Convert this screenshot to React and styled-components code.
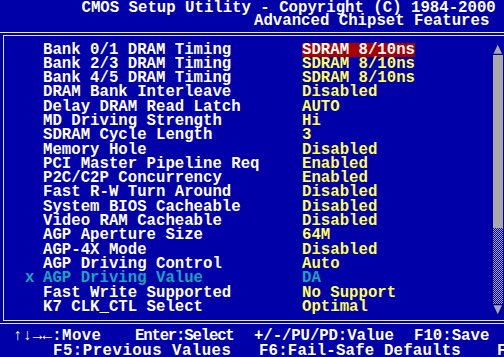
import React from "react";
import styled, { createGlobalStyle } from "styled-components";

const BLUE = "#0000a8";
const GRAY = "#a8a8a8";

const GlobalStyle = createGlobalStyle`
  html, body {
    margin: 0;
    padding: 0;
    background: ${BLUE};
    overflow: hidden;
  }
`;

const Data = [
  { label: "Bank 0/1 DRAM Timing", value: "SDRAM 8/10ns", selected: true },
  { label: "Bank 2/3 DRAM Timing", value: "SDRAM 8/10ns" },
  { label: "Bank 4/5 DRAM Timing", value: "SDRAM 8/10ns" },
  { label: "DRAM Bank Interleave", value: "Disabled" },
  { label: "Delay DRAM Read Latch", value: "AUTO" },
  { label: "MD Driving Strength", value: "Hi" },
  { label: "SDRAM Cycle Length", value: "3" },
  { label: "Memory Hole", value: "Disabled" },
  { label: "PCI Master Pipeline Req", value: "Enabled" },
  { label: "P2C/C2P Concurrency", value: "Enabled" },
  { label: "Fast R-W Turn Around", value: "Disabled" },
  { label: "System BIOS Cacheable", value: "Disabled" },
  { label: "Video RAM Cacheable", value: "Disabled" },
  { label: "AGP Aperture Size", value: "64M" },
  { label: "AGP-4X Mode", value: "Disabled" },
  { label: "AGP Driving Control", value: "Auto" },
  { label: "AGP Driving Value", value: "DA", locked: true },
  { label: "Fast Write Supported", value: "No Support" },
  { label: "K7 CLK_CTL Select", value: "Optimal" },
];

const Screen = styled.div`
  width: 504px;
  height: 357px;
  overflow: hidden;
  background: ${BLUE};
  color: #ffffff;
  font-family: "Liberation Mono", "DejaVu Sans Mono", monospace;
  font-weight: bold;
  font-size: 15.7px;
  white-space: pre;
`;

const Header = styled.header`
  padding-top: 2px;
  height: 24px;
  line-height: 12.5px;
`;

const TitleLine = styled.div`
  padding-left: ${(p) => p.$indent}px;
`;

// outer half of the double frame
const OuterFrame = styled.div`
  margin-top: 6px;
  border-top: 1px solid #e8e8e8;
  border-bottom: 1px solid #e8e8e8;
  padding: 2px 0;
`;

const InnerFrame = styled.div`
  margin-left: 3px;
  border-top: 1px solid #e8e8e8;
  border-left: 1px solid #e8e8e8;
  border-bottom: 1px solid #e8e8e8;
  display: flex;
  height: 284px;
`;

const List = styled.div`
  width: 489px;
  flex: none;
  padding-top: 6.5px;
  display: grid;
  grid-template-columns: 39px 259px 1fr;
  grid-auto-rows: 14.3px;
  line-height: 14.3px;
`;

const Marker = styled.span`
  padding-left: 21px;
  color: #18a4c0;
`;

const Label = styled.span`
  color: ${(p) => (p.$locked ? "#18a4c0" : "#ffffff")};
`;

const Value = styled.span`
  color: ${(p) => (p.$locked ? "#18a4c0" : p.$selected ? "#ffffff" : "#ffff55")};
  background: ${(p) => (p.$selected ? "#a80000" : "transparent")};
  justify-self: start;
`;

const ScrollBar = styled.div`
  width: 9.5px;
  margin-top: 8px;
  display: flex;
  flex-direction: column;
`;

const Arrow = styled.svg`
  display: block;
  width: 9.5px;
  height: 10px;
  flex: none;
`;

const Thumb = styled.div`
  margin-top: 1px;
  height: 173px;
  background: ${GRAY};
`;

const Track = styled.div`
  height: 76px;
  background-image: conic-gradient(${GRAY} 25%, ${BLUE} 0 50%, ${GRAY} 0 75%, ${BLUE} 0);
  background-size: 2px 2px;
`;

const Footer = styled.footer`
  padding-top: 5px;
  line-height: 15px;
`;

const FooterLine = styled.div`
  display: grid;
  grid-template-columns: ${(p) => p.$cols};
  padding-left: ${(p) => p.$indent}px;
`;

const Key = styled.span`
  letter-spacing: ${(p) => p.$spacing || 0}px;
`;

function App() {
  return (
    <Screen>
      <GlobalStyle />
      <Header>
        <TitleLine $indent={81.5}>CMOS Setup Utility - Copyright (C) 1984-2000 Award Software</TitleLine>
        <TitleLine $indent={254}>Advanced Chipset Features</TitleLine>
      </Header>
      <OuterFrame>
        <InnerFrame>
          <List>
            {Data.map(({ label, value, selected, locked }) => (
              <React.Fragment key={label}>
                <Marker>{locked ? "x" : ""}</Marker>
                <Label $locked={locked}>{label}</Label>
                <Value $selected={selected} $locked={locked}>
                  {value}
                </Value>
              </React.Fragment>
            ))}
          </List>
          <ScrollBar>
            <Arrow viewBox="0 0 10 10">
              <polygon points="5,0.5 9.5,10 0.5,10" fill={GRAY} />
            </Arrow>
            <Thumb />
            <Track />
            <Arrow viewBox="0 0 10 10" style={{ marginTop: 1 }}>
              <polygon points="0.5,0 9.5,0 5,9.5" fill={GRAY} />
            </Arrow>
          </ScrollBar>
        </InnerFrame>
      </OuterFrame>
      <Footer>
        <FooterLine $indent={13} $cols="122px 119px 160px max-content">
          <Key $spacing={0.4}>↑↓→←:Move</Key>
          <Key $spacing={-1.2}>Enter:Select</Key>
          <Key $spacing={-0.1}>+/-/PU/PD:Value</Key>
          <Key>F10:Save  ESC:Exit  F1:General Help</Key>
        </FooterLine>
        <FooterLine $indent={53} $cols="206px 238px max-content">
          <Key $spacing={0.5}>F5:Previous Values</Key>
          <Key $spacing={0.2}>F6:Fail-Safe Defaults</Key>
          <Key>F7:Optimized Defaults</Key>
        </FooterLine>
      </Footer>
    </Screen>
  );
}

export default App;
